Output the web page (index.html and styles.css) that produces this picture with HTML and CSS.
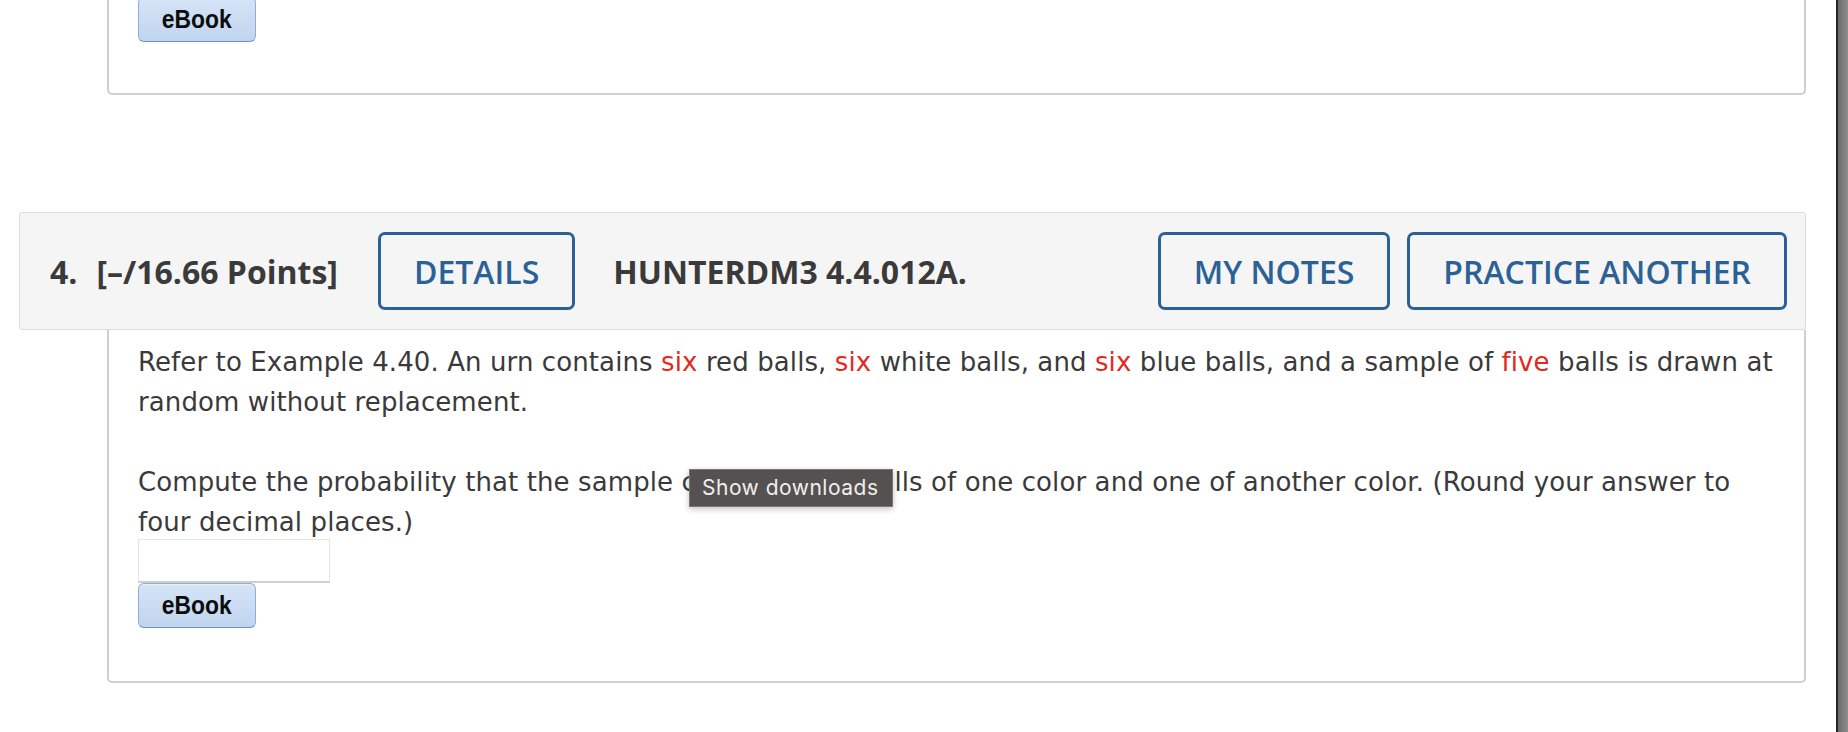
FILE: index.html
```html
<!DOCTYPE html>
<html>
<head>
<meta charset="utf-8">
<link rel="stylesheet" href="styles.css">
</head>
<body>
<div class="page">
  <div class="card card-top">
    <button class="ebook"><span class="ebook-label">eBook</span></button>
  </div>

  <section class="question">
    <div class="q-header">
      <span class="q-num">4.</span>
      <span class="q-points">[–/16.66 Points]</span>
      <button class="btn">DETAILS</button>
      <span class="q-code">HUNTERDM3 4.4.012A.</span>
      <div class="q-actions">
        <button class="btn">MY NOTES</button>
        <button class="btn">PRACTICE ANOTHER</button>
      </div>
    </div>
    <div class="card card-body">
      <p class="q-text">Refer to Example 4.40. An urn contains <span class="red">six</span> red balls, <span class="red">six</span> white balls, and <span class="red">six</span> blue balls, and a sample of <span class="red">five</span> balls is drawn at random without replacement.</p>
      <p class="q-text gap">Compute the probability that the sample contains four balls of one color and one of another color. (Round your answer to four decimal places.)</p>
      <input class="answer" type="text">
      <button class="ebook"><span class="ebook-label">eBook</span></button>
    </div>
  </section>
</div>
<div class="tooltip">Show downloads</div>
<div class="window-edge"></div>
</body>
</html>
```

FILE: styles.css
```css
html, body {
  margin: 0;
  padding: 0;
  background: #ffffff;
  overflow: hidden;
}

.page {
  padding-left: 19px;
  width: 1787px;
}

.card {
  margin-left: 88px;
  border: 2px solid #cfcfcf;
  border-top: none;
  border-radius: 0 0 5px 5px;
  background: #fff;
}

.card-top {
  margin-top: -3px;
  padding: 0 0 51px 29px;
}

.ebook {
  display: block;
  width: 118px;
  height: 45px;
  padding: 0;
  border: 1px solid #8fadd8;
  border-bottom-color: #6f8fc4;
  border-radius: 6px;
  background: linear-gradient(#d6e4f6, #c0d5f0);
  font-family: "Liberation Sans", Arial, sans-serif;
  font-weight: bold;
  font-size: 26px;
  color: #0c0c0c;
  box-shadow: inset 0 1px 0 #e6effa;
}

.ebook-label {
  display: inline-block;
  transform: scaleX(0.88);
}

.question {
  margin-top: 117px;
}

.q-header {
  display: flex;
  align-items: center;
  height: 116px;
  padding: 0 18px 0 30px;
  background: #f5f5f5;
  border: 1px solid #dcdcdc;
  border-radius: 3px;
  font-family: "Open Sans", sans-serif;
  font-weight: 700;
  font-size: 32px;
  color: #3a3a3a;
}

.q-points {
  margin-left: 19px;
}

.btn {
  height: 78px;
  padding: 0 33px;
  border: 3px solid #2b6195;
  border-radius: 7px;
  background: transparent;
  font-family: "Open Sans", sans-serif;
  font-weight: 600;
  font-size: 32px;
  color: #2b6195;
}

.q-header > .btn {
  margin-left: 40px;
}

.q-code {
  margin-left: 38px;
}

.q-actions {
  margin-left: auto;
  display: flex;
  gap: 17px;
}

.card-body {
  padding: 12px 18px 53px 29px;
  border-radius: 0 0 5px 5px;
}

.q-text {
  margin: 0;
  font-family: "DejaVu Sans", Verdana, sans-serif;
  font-size: 26px;
  letter-spacing: 0.1px;
  line-height: 40px;
  color: #3a3a3a;
}

.q-text.gap {
  margin-top: 40px;
}

.red {
  color: #e3291d;
}

.answer {
  display: block;
  box-sizing: border-box;
  width: 192px;
  height: 44px;
  margin: -3px 0 0 0;
  border: 1px solid #e6e6e6;
  border-bottom: 2px solid #cfcfcf;
  background: #fff;
}

.tooltip {
  position: absolute;
  left: 689px;
  top: 469px;
  width: 204px;
  height: 38px;
  box-sizing: border-box;
  padding: 5px 0 0 12px;
  background: #565151;
  border: 1px solid #7a7676;
  box-shadow: 0 2px 6px rgba(0,0,0,0.25);
  font-family: Inter, "Liberation Sans", sans-serif;
  font-size: 21px;
  letter-spacing: 0.5px;
  color: #efefef;
  white-space: nowrap;
}

.window-edge {
  position: absolute;
  top: 0;
  right: 0;
  width: 10px;
  height: 732px;
  background: linear-gradient(90deg, #6a6a6a, #8e8e8e);
  border-left: 2px solid #262626;
}
```
